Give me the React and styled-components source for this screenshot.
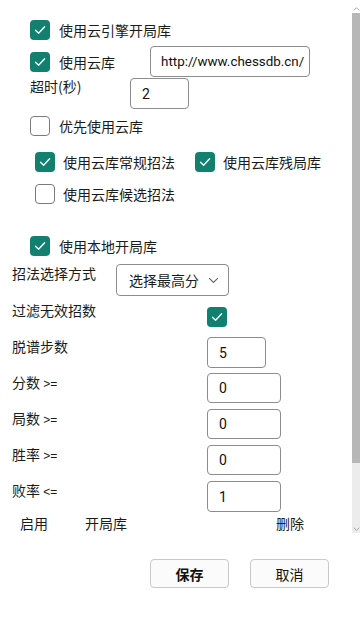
import React from "react";
import styled, { createGlobalStyle } from "styled-components";

const Global = createGlobalStyle`
  html, body { margin: 0; padding: 0; background: #ffffff; }
  body {
    font-family: "Noto Sans CJK SC", "Noto Sans", sans-serif;
    color: #1b1b1b;
    font-size: 14px;
  }
  * { box-sizing: border-box; }
`;

const Page = styled.div`
  width: 360px;
  height: 619px;
  display: flex;
  flex-direction: column;
  overflow: hidden;
  background: #fff;
`;

const ScrollArea = styled.div`
  display: flex;
  height: 537px;
`;

const Content = styled.div`
  flex: 1;
  display: flex;
  flex-direction: column;
  padding-top: 20px;
`;

const ScrollBar = styled.div`
  width: 8px;
  margin-top: 5px;
  height: 528px;
  display: flex;
  flex-direction: column;
  align-items: stretch;
`;

const Arrow = styled.div`
  height: 8px;
  display: flex;
  align-items: center;
  justify-content: center;
  background: ${(p) => (p.$bottom ? "#ececec" : "transparent")};
`;

const Thumb = styled.div`
  height: 450px;
  background: #b7b7b7;
`;

const Track = styled.div`
  flex: 1;
  background: #ececec;
`;

const Row = styled.div`
  display: flex;
  align-items: ${(p) => p.$align || "center"};
  margin-top: ${(p) => p.$mt || 0}px;
  padding-left: ${(p) => p.$pl || 0}px;
  height: ${(p) => p.$h || 20}px;
`;

const CheckItem = styled.label`
  display: flex;
  align-items: center;
  gap: ${(p) => p.$gap || 9}px;
  width: ${(p) => (p.$w ? `${p.$w}px` : "auto")};
  flex-shrink: 0;
  line-height: 20px;
  white-space: nowrap;
`;

const Box = styled.span`
  width: 20px;
  height: 20px;
  border-radius: 4px;
  flex-shrink: 0;
  display: flex;
  align-items: center;
  justify-content: center;
  margin-top: ${(p) => p.$mt || 0}px;
  background: ${(p) => (p.$on ? "#12806f" : "#fff")};
  border: ${(p) => (p.$on ? "none" : "1.5px solid #7a7a7a")};
`;

const Label = styled.span`
  width: ${(p) => p.$w}px;
  flex-shrink: 0;
  line-height: 18px;
  margin-top: ${(p) => p.$mt || 0}px;
  white-space: nowrap;
`;

const Sym = styled.span`
  font-family: "Liberation Sans", Arial, sans-serif;
  font-size: 12px;
`;

const Input = styled.div`
  width: ${(p) => p.$w}px;
  height: ${(p) => p.$h || 31}px;
  border: 1px solid #8c8c8c;
  border-radius: 4px;
  background: #fff;
  display: flex;
  align-items: center;
  padding-left: ${(p) => (p.$url ? 10 : 11)}px;
  font-family: Roboto, "Liberation Sans", Arial, sans-serif;
  font-size: ${(p) => (p.$url ? 13.4 : 14)}px;
  color: #111;
  overflow: hidden;
  white-space: nowrap;
  flex-shrink: 0;
`;

const Select = styled.div`
  width: 113px;
  height: 32px;
  border: 1px solid #8c8c8c;
  border-radius: 4px;
  display: flex;
  align-items: center;
  justify-content: space-between;
  padding: 0 9px 0 12px;
  font-size: 14px;
`;

const Lower = styled.div`
  display: flex;
  flex-direction: column;
  padding-left: 12px;
  margin-top: 8px;
`;

const FormRow = styled.div`
  display: flex;
  align-items: flex-start;
  height: ${(p) => p.$h || 36}px;
`;

const Header = styled.div`
  display: flex;
  height: 20px;
  line-height: 20px;
  margin-top: 1px;
  padding-left: 20px;
  color: #1b1b1b;
`;

const HeadCell = styled.span`
  width: ${(p) => p.$w}px;
  flex-shrink: 0;
  color: #1b1b1b;
`;

const Footer = styled.div`
  display: flex;
  justify-content: flex-end;
  gap: 21px;
  padding-right: 31px;
  margin-top: 22px;
`;

const Button = styled.button`
  width: 79px;
  height: 29px;
  border: 1px solid #c9c9c9;
  border-radius: 4px;
  background: #fbfbfb;
  font-family: "Noto Sans CJK SC", sans-serif;
  font-size: 14px;
  font-weight: ${(p) => (p.$bold ? 700 : 400)};
  color: #111;
  padding: 0;
`;

const Check = () => (
  <svg width="12" height="10" viewBox="0 0 12 10">
    <path d="M1.5 5.2 L4.6 8.2 L10.6 1.8" fill="none" stroke="#fff" strokeWidth="1.3" strokeLinecap="round" strokeLinejoin="round" />
  </svg>
);

const CB = ({ on, mt }) => <Box $on={on} $mt={mt}>{on && <Check />}</Box>;

const Chevron = ({ up, size = 11, color = "#666" }) => (
  <svg width={size} height={size * 0.6} viewBox="0 0 10 6">
    <path d={up ? "M1 5 L5 1 L9 5" : "M1 1 L5 5 L9 1"} fill="none" stroke={color} strokeWidth="1" />
  </svg>
);

export default function App() {
  return (
    <Page>
      <Global />
      <ScrollArea>
        <Content>
          <Row $pl={30}>
            <CheckItem><CB on />使用云引擎开局库</CheckItem>
          </Row>
          <Row $pl={30} $mt={6} $h={31}>
            <CheckItem $w={120}><CB on />使用云库</CheckItem>
            <Input $w={160} $url>http://www.chessdb.cn/</Input>
          </Row>
          <Row $pl={30} $mt={1} $h={31} $align="flex-start">
            <Label $w={100} $mt={-1}>超时(秒)</Label>
            <Input $w={59}>2</Input>
          </Row>
          <Row $pl={30} $mt={7}>
            <CheckItem><CB />优先使用云库</CheckItem>
          </Row>
          <Row $pl={35} $mt={16}>
            <CheckItem $w={160} $gap={8}><CB on />使用云库常规招法</CheckItem>
            <CheckItem $gap={8}><CB on />使用云库残局库</CheckItem>
          </Row>
          <Row $pl={35} $mt={12}>
            <CheckItem $gap={8}><CB />使用云库候选招法</CheckItem>
          </Row>
          <Row $pl={30} $mt={32}>
            <CheckItem><CB on />使用本地开局库</CheckItem>
          </Row>
          <Lower>
            <FormRow $h={37}>
              <Label $w={104}>招法选择方式</Label>
              <Select>
                选择最高分
                <Chevron />
              </Select>
            </FormRow>
            <FormRow>
              <Label $w={195}>过滤无效招数</Label>
              <CB on mt={6} />
            </FormRow>
            <FormRow>
              <Label $w={195}>脱谱步数</Label>
              <Input $w={59}>5</Input>
            </FormRow>
            <FormRow>
              <Label $w={195}>分数 <Sym>&gt;=</Sym></Label>
              <Input $w={74} $h={30}>0</Input>
            </FormRow>
            <FormRow>
              <Label $w={195}>局数 <Sym>&gt;=</Sym></Label>
              <Input $w={74} $h={30}>0</Input>
            </FormRow>
            <FormRow>
              <Label $w={195}>胜率 <Sym>&gt;=</Sym></Label>
              <Input $w={74} $h={30}>0</Input>
            </FormRow>
            <FormRow $h={31}>
              <Label $w={195}>败率 <Sym>&lt;=</Sym></Label>
              <Input $w={74} $h={31}>1</Input>
            </FormRow>
          </Lower>
          <Header>
            <HeadCell $w={65}>启用</HeadCell>
            <HeadCell $w={191}>开局库</HeadCell>
            <HeadCell $w={40}>删除</HeadCell>
          </Header>
        </Content>
        <ScrollBar>
          <Arrow><Chevron up size={7} color="#888" /></Arrow>
          <Thumb />
          <Track />
          <Arrow $bottom><Chevron size={7} color="#888" /></Arrow>
        </ScrollBar>
      </ScrollArea>
      <Footer>
        <Button $bold>保存</Button>
        <Button>取消</Button>
      </Footer>
    </Page>
  );
}
